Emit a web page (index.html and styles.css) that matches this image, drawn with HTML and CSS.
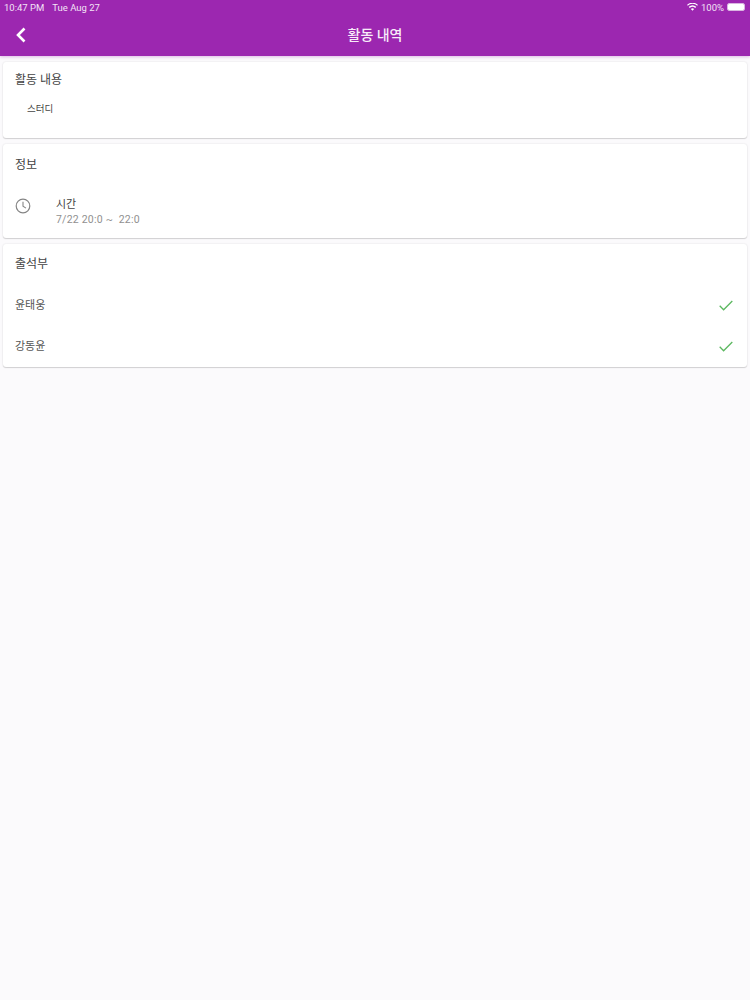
FILE: index.html
```html
<!DOCTYPE html>
<html lang="ko">
<head>
<meta charset="utf-8">
<title>활동 내역</title>
<link rel="stylesheet" href="styles.css">
</head>
<body>
<header class="appbar">
  <div class="status">
    <span class="status-time">10:47 PM</span>
    <span class="status-date">Tue Aug 27</span>
    <span class="status-spacer"></span>
    <svg class="wifi" width="11" height="8" viewBox="0 0 12 9"><path d="M6 8.800 4.200 6.800a2.700 2.700 0 0 1 3.600 0zM2.900 5.500 1.800 4.300a6.300 6.300 0 0 1 8.400 0L9.100 5.500a4.600 4.600 0 0 0-6.200 0zM.6 3 0 1.900a9 9 0 0 1 12 0L11.400 3a7.900 7.900 0 0 0-10.800 0z" fill="#fff"/></svg>
    <span class="status-batt">100%</span>
    <span class="battery"><span class="battery-fill"></span></span>
  </div>
  <div class="toolbar">
    <svg class="back" width="12" height="16" viewBox="0 0 12 16"><path d="M9.500 1.500 3 8l6.500 6.500" fill="none" stroke="#fff" stroke-width="2.600"/></svg>
    <h1 class="title">활동 내역</h1>
  </div>
</header>
<main class="content">
  <section class="card card-activity">
    <h2 class="card-title">활동 내용</h2>
    <p class="activity-text">스터디</p>
  </section>
  <section class="card card-info">
    <h2 class="card-title">정보</h2>
    <div class="info-row">
      <svg class="clock" width="16" height="16" viewBox="0 0 16 16"><circle cx="8" cy="8" r="6.800" fill="none" stroke="#858585" stroke-width="1.200"/><path d="M8 3.800V8.300l3 1.800" fill="none" stroke="#858585" stroke-width="1.100"/></svg>
      <div class="info-text">
        <div class="info-label">시간</div>
        <div class="info-value">7/22 20:0 ~&nbsp; 22:0</div>
      </div>
    </div>
  </section>
  <section class="card card-attend">
    <h2 class="card-title">출석부</h2>
    <div class="attend-row first">
      <span class="attend-name">윤태웅</span>
      <svg class="check" width="14" height="11" viewBox="0 0 14 11"><path d="M.7 5.800 4.600 9.800 13.300 1" fill="none" stroke="#5cb860" stroke-width="1.300"/></svg>
    </div>
    <div class="attend-row">
      <span class="attend-name">강동윤</span>
      <svg class="check" width="14" height="11" viewBox="0 0 14 11"><path d="M.7 5.800 4.600 9.800 13.300 1" fill="none" stroke="#5cb860" stroke-width="1.300"/></svg>
    </div>
  </section>
</main>
</body>
</html>
```
FILE: styles.css
```css
* { box-sizing: border-box; }
html, body { margin: 0; height: 100%; }
body {
  background: #fbfafc;
  font-family: "Roboto", "Noto Sans CJK KR", sans-serif;
  color: #333;
  overflow: hidden;
}
.appbar {
  height: 56px;
  background: #9c27b0;
  box-shadow: 0 1px 3px rgba(156, 39, 176, .3);
  color: #fff;
}
.status {
  height: 14px;
  display: flex;
  align-items: center;
  padding: 0 5px 0 4px;
  font-size: 9.500px;
  color: #f3e3f6;
}
.status-date { margin-left: 8px; }
.status-spacer { flex: 1; }
.wifi { margin-right: 3px; }
.status-batt { margin-right: 3px; }
.battery {
  width: 18px;
  height: 8px;
  border: 1px solid #d9b5e0;
  border-radius: 2px;
  padding: 0;
  display: block;
}
.battery-fill { display: block; width: 100%; height: 100%; background: #fff; border-radius: 1px; }
.toolbar {
  height: 42px;
  position: relative;
  display: flex;
  align-items: center;
  justify-content: center;
  padding-bottom: 2px;
}
.back { position: absolute; left: 15px; top: 13px; }
.title {
  margin: 0;
  font-size: 14px;
  font-weight: 500;
  color: #f7ecf9;
}
.content {
  padding: 6px 3px 0;
  display: flex;
  flex-direction: column;
  gap: 6px;
}
.card {
  background: #fff;
  border-radius: 3px;
  box-shadow: 0 1px 1px rgba(0, 0, 0, .14), 0 0 2px rgba(0, 0, 0, .12);
  padding: 0 12px;
}
.card-title {
  margin: 0;
  font-size: 12px;
  line-height: 18px;
  font-weight: 400;
  color: #444;
}
.card-activity { height: 76px; padding-top: 9px; }
.activity-text {
  margin: 13px 0 0 12px;
  font-size: 9.500px;
  line-height: 14px;
  color: #444;
}
.card-info { height: 94px; padding-top: 12px; }
.info-row { display: flex; margin-top: 23px; }
.clock { margin-top: 1px; flex: none; }
.info-text { margin-left: 25px; }
.info-label { font-size: 11px; line-height: 16px; color: #444; }
.info-value { font-size: 10.500px; line-height: 14px; color: #909090; letter-spacing: .22px; }
.card-attend { height: 123px; padding-top: 11px; }
.attend-row {
  display: flex;
  align-items: center;
  justify-content: space-between;
  height: 41px;
  padding-right: 1px;
}
.attend-row.first { margin-top: 11px; }
.attend-name { font-size: 11px; color: #555; margin-top: -2px; }
.check { margin-top: 2px; margin-right: 1px; }
```
